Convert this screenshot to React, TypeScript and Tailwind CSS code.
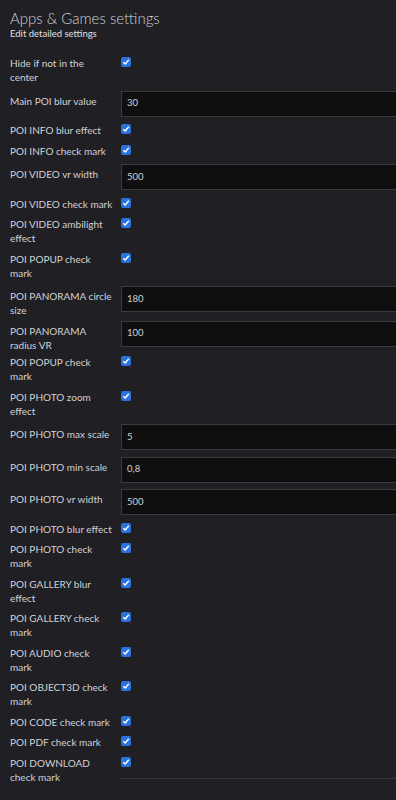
type Row =
  | { lines: string[]; kind: "check" }
  | { lines: string[]; kind: "input"; value: string };

// line breaks follow the reference exactly
const rows: Row[] = [
  { lines: ["Hide if not in the", "center"], kind: "check" },
  { lines: ["Main POI blur value"], kind: "input", value: "30" },
  { lines: ["POI INFO blur effect"], kind: "check" },
  { lines: ["POI INFO check mark"], kind: "check" },
  { lines: ["POI VIDEO vr width"], kind: "input", value: "500" },
  { lines: ["POI VIDEO check mark"], kind: "check" },
  { lines: ["POI VIDEO ambilight", "effect"], kind: "check" },
  { lines: ["POI POPUP check", "mark"], kind: "check" },
  { lines: ["POI PANORAMA circle", "size"], kind: "input", value: "180" },
  { lines: ["POI PANORAMA", "radius VR"], kind: "input", value: "100" },
  { lines: ["POI POPUP check", "mark"], kind: "check" },
  { lines: ["POI PHOTO zoom", "effect"], kind: "check" },
  { lines: ["POI PHOTO max scale"], kind: "input", value: "5" },
  { lines: ["POI PHOTO min scale"], kind: "input", value: "0,8" },
  { lines: ["POI PHOTO vr width"], kind: "input", value: "500" },
  { lines: ["POI PHOTO blur effect"], kind: "check" },
  { lines: ["POI PHOTO check", "mark"], kind: "check" },
  { lines: ["POI GALLERY blur", "effect"], kind: "check" },
  { lines: ["POI GALLERY check", "mark"], kind: "check" },
  { lines: ["POI AUDIO check", "mark"], kind: "check" },
  { lines: ["POI OBJECT3D check", "mark"], kind: "check" },
  { lines: ["POI CODE check mark"], kind: "check" },
  { lines: ["POI PDF check mark"], kind: "check" },
  { lines: ["POI DOWNLOAD", "check mark"], kind: "check" },
];

const CheckBox = () => (
  <span className="mt-[1px] flex h-[10px] w-[10px] items-center justify-center rounded-[2px] bg-[#2a72dc]">
    <svg width="8" height="8" viewBox="0 0 8 8">
      <path d="M1.3 4.2 L3.2 6 L6.8 1.8" fill="none" stroke="#ffffff" strokeWidth="1.5" />
    </svg>
  </span>
);

const App: React.FC = () => {
  return (
    <div className="min-h-[800px] w-[396px] overflow-hidden bg-[#1f1f24] px-[10px] pt-[8px] font-['Lato',sans-serif] text-[#d2d2d6]">
      <h2 className="text-[15px] leading-[20px] font-light text-[#d0d0d4]">Apps &amp; Games settings</h2>
      <p className="text-[9.5px] leading-[12px] text-[#e0e0e3]">Edit detailed settings</p>
      <div className="mt-[16px] flex flex-col">
        {rows.map((row, i) => {
          const last = i === rows.length - 1;
          return (
            <div key={i} className={"flex items-start " + (last ? "" : "mb-[6.5px]")}>
              <div
                className={
                  "w-[111px] shrink-0 whitespace-nowrap text-[10px] leading-[14px] " +
                  (row.kind === "input" ? "pt-[3px] " : "") +
                  (row.kind === "input" && row.lines.length > 1 ? "-mb-[3px]" : "")
                }
              >
                {row.lines.map((l, j) => (
                  <div key={j}>{l}</div>
                ))}
              </div>
              {row.kind === "check" ? (
                <CheckBox />
              ) : (
                <div className="flex h-[26px] w-[300px] shrink-0 items-center border border-[#3b3b3f] bg-[#0f0f10] pl-[5px] text-[9.5px] text-[#cfcfd2]">
                  {row.value}
                </div>
              )}
            </div>
          );
        })}
        <div className="-mt-[6px] ml-[110px] h-px w-[300px] bg-[#37373c]" />
      </div>
    </div>
  );
};

export default App;
